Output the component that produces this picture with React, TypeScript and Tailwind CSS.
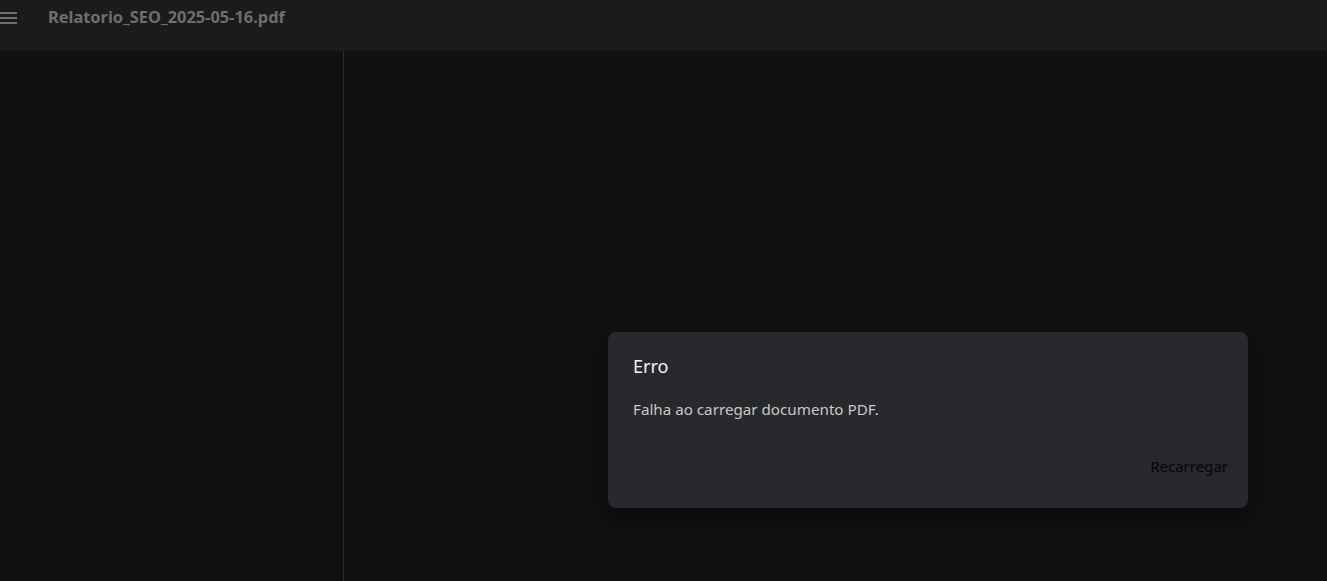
export default function App() {
  const font = { fontFamily: '"Noto Sans", "Open Sans", sans-serif' };
  return (
    <div className="h-[581px] w-[1327px] overflow-hidden bg-[#111111] flex flex-col" style={font}>
      <header className="h-[51px] shrink-0 bg-[#1b1b1b] flex items-start">
        <div className="w-[48px] h-[34px] flex items-center">
          <svg width="18" height="14" viewBox="0 0 18 14" className="-mt-[1px]">
            <rect x="0" y="2" width="17" height="2" fill="#6f6f6f" />
            <rect x="0" y="7" width="17" height="2" fill="#6f6f6f" />
            <rect x="0" y="12" width="17" height="2" fill="#6f6f6f" />
          </svg>
        </div>
        <div className="h-[34px] flex items-center text-[16.4px] font-bold text-[#6e6e6e]">
          Relatorio_SEO_2025-05-16.pdf
        </div>
      </header>
      <div className="flex flex-1 min-h-0">
        <aside className="w-[344px] shrink-0 border-r border-[#2a2a2a]" />
        <main className="flex-1 relative">
          <div className="absolute left-[264px] top-[281px] w-[640px] h-[176px] rounded-[8px] bg-[#28292d] shadow-[0_8px_24px_rgba(0,0,0,0.55)] flex flex-col px-[25px] pt-[20px] pb-[31px]">
            <div className="text-[18px] text-[#f2f2f2] leading-[28px]">Erro</div>
            <div className="mt-[19px] text-[15.2px] text-[#c8c8c8] leading-[20px]">Falha ao carregar documento PDF.</div>
            <div className="mt-auto flex justify-end">
              <span className="text-[15px] text-[#050505] -mr-[5px]">Recarregar</span>
            </div>
          </div>
        </main>
      </div>
    </div>
  );
}
